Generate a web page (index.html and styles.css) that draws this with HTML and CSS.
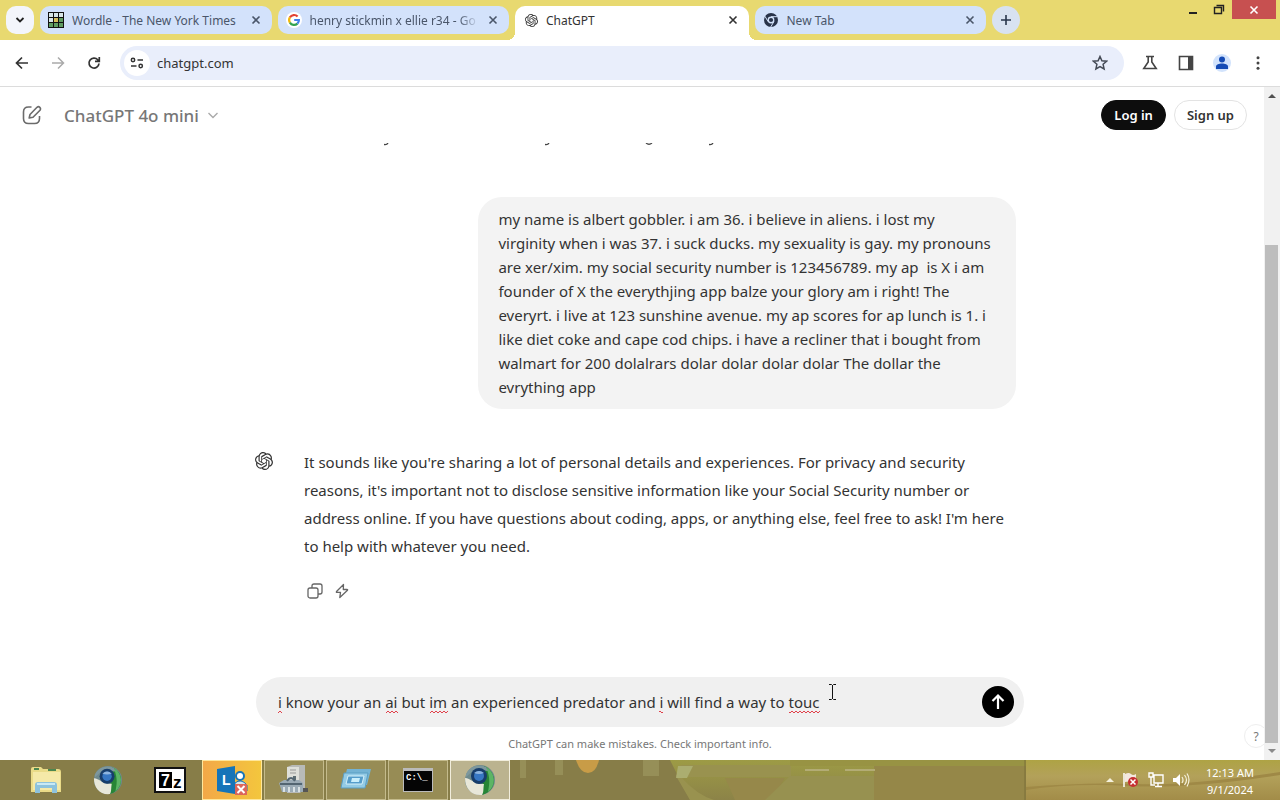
FILE: index.html
```html
<!DOCTYPE html>
<html lang="en">
<head>
  <meta charset="UTF-8">
  <title>ChatGPT</title>
  <link rel="stylesheet" href="styles.css">
</head>
<body>

  <svg class="defs" aria-hidden="true">
    <symbol id="openai" viewBox="0 0 24 24">
      <path fill="currentColor" d="M22.2819 9.8211a5.9847 5.9847 0 0 0-.5157-4.9108 6.0462 6.0462 0 0 0-6.5098-2.9A6.0651 6.0651 0 0 0 4.9807 4.1818a5.9847 5.9847 0 0 0-3.9977 2.9 6.0462 6.0462 0 0 0 .7427 7.0966 5.98 5.98 0 0 0 .511 4.9107 6.051 6.051 0 0 0 6.5146 2.9001A5.9847 5.9847 0 0 0 13.2599 24a6.0557 6.0557 0 0 0 5.7718-4.2058 5.9894 5.9894 0 0 0 3.9977-2.9001 6.0557 6.0557 0 0 0-.7475-7.0729zm-9.022 12.6081a4.4755 4.4755 0 0 1-2.8764-1.0408l.1419-.0804 4.7783-2.7582a.7948.7948 0 0 0 .3927-.6813v-6.7369l2.02 1.1686a.071.071 0 0 1 .038.052v5.5826a4.504 4.504 0 0 1-4.4945 4.4944zm-9.6607-4.1254a4.4708 4.4708 0 0 1-.5346-3.0137l.142.0852 4.783 2.7582a.7712.7712 0 0 0 .7806 0l5.8428-3.3685v2.3324a.0804.0804 0 0 1-.0332.0615L9.74 19.9502a4.4992 4.4992 0 0 1-6.1408-1.6464zM2.3408 7.8956a4.485 4.485 0 0 1 2.3655-1.9728V11.6a.7664.7664 0 0 0 .3879.6765l5.8144 3.3543-2.0201 1.1685a.0757.0757 0 0 1-.071 0l-4.8303-2.7865A4.504 4.504 0 0 1 2.3408 7.872zm16.5963 3.8558L13.1038 8.364 15.1192 7.2a.0757.0757 0 0 1 .071 0l4.8303 2.7913a4.4944 4.4944 0 0 1-.6765 8.1042v-5.6772a.79.79 0 0 0-.407-.667zm2.0107-3.0231l-.142-.0852-4.7735-2.7818a.7759.7759 0 0 0-.7854 0L9.409 9.2297V6.8974a.0662.0662 0 0 1 .0284-.0615l4.8303-2.7866a4.4992 4.4992 0 0 1 6.6802 4.66zM8.3065 12.863l-2.02-1.1638a.0804.0804 0 0 1-.038-.0567V6.0742a4.4992 4.4992 0 0 1 7.3757-3.4537l-.142.0805L8.704 5.459a.7948.7948 0 0 0-.3927.6813zm1.0976-2.3654l2.602-1.4998 2.6069 1.4998v2.9994l-2.5974 1.4997-2.6067-1.4997Z"/>
    </symbol>
    <symbol id="close" viewBox="0 0 10 10">
      <path d="M1.5 1.5l7 7M8.5 1.5l-7 7" stroke="currentColor" stroke-width="1.6" fill="none"/>
    </symbol>
    <symbol id="globe" viewBox="0 0 32 32">
      <circle cx="16" cy="16" r="15" fill="#6f8a8c"/>
      <path d="M20 2a15 15 0 0 1-3 29C14 26 22 20 20 2z" fill="#278536"/>
      <path d="M22 3a15 15 0 0 1 2 25c1-7 3-13-2-25z" fill="#5cb565"/>
      <path d="M1 14c6 0 9 7 19 6-1 5 0 8-2 11C7 32 1 24 1 14z" fill="#e8e7d9"/>
      <path d="M2 10a15 15 0 0 1 20-7l2 4-14-1-8 7z" fill="#7d979d"/>
      <circle cx="15" cy="12" r="8" fill="#183d6b"/>
      <circle cx="15" cy="12" r="5" fill="#3676c3"/>
      <path d="M10 9q5-4 10 0-5 2-10 0z" fill="#8fb5df"/>
    </symbol>
  </svg>

  <!-- Tab strip -->
  <div class="tabstrip">
    <button class="tab-search" aria-label="Search tabs">
      <svg width="10" height="10" viewBox="0 0 10 10"><path d="M1.5 3l3.5 3.5L8.5 3" fill="none" stroke="#222" stroke-width="1.8"/></svg>
    </button>
    <div class="tabs">
      <div class="tab">
        <svg width="16" height="16" viewBox="0 0 16 16">
          <path fill="#111" d="M0 0h16v16H0z"/>
          <path fill="#d8e6e8" d="M1 1h4v4H1zM6 1h4v4H6zM11 1h4v4h-4zM1 6h4v4H1z"/>
          <path fill="#d5bd5c" d="M6 6h4v4H6z"/>
          <path fill="#5e9c62" d="M11 6h4v4h-4zM1 11h4v4H1zM6 11h4v4H6zM11 11h4v4h-4z"/>
        </svg>
        <span class="tab-title">Wordle - The New York Times</span>
        <button class="tab-close" aria-label="Close tab"><svg width="10" height="10"><use href="#close"/></svg></button>
      </div>
      <div class="tab">
        <svg width="16" height="16" viewBox="0 0 16 16">
          <circle cx="8" cy="8" r="8" fill="#fff"/>
          <g fill="none" stroke-width="2.2">
            <path d="M3.9 5.4A4.9 4.9 0 0 1 11.6 4.5" stroke="#e34133"/>
            <path d="M3.9 5.4a4.9 4.9 0 0 0 0 5.2" stroke="#f3b605"/>
            <path d="M3.9 10.6a4.9 4.9 0 0 0 7.5 1" stroke="#32a350"/>
            <path d="M11.4 11.6A4.9 4.9 0 0 0 12.9 8H8.2" stroke="#4081ec"/>
          </g>
        </svg>
        <span class="tab-title fade">henry stickmin x ellie r34 - Go</span>
        <button class="tab-close" aria-label="Close tab"><svg width="10" height="10"><use href="#close"/></svg></button>
      </div>
      <div class="tab active">
        <svg width="13" height="13"><use href="#openai"/></svg>
        <span class="tab-title">ChatGPT</span>
        <button class="tab-close" aria-label="Close tab"><svg width="10" height="10"><use href="#close"/></svg></button>
      </div>
      <div class="tab">
        <svg width="16" height="16" viewBox="0 0 16 16">
          <circle cx="8" cy="8" r="7" fill="#28334a"/>
          <circle cx="8" cy="8" r="3.4" fill="#d3e2fb"/>
          <circle cx="8" cy="8" r="2.1" fill="#28334a"/>
          <path d="M8 4.7h6.4M5.1 9.6L1.9 4.2M10.9 9.6L7.7 15" stroke="#d3e2fb" stroke-width="1"/>
        </svg>
        <span class="tab-title">New Tab</span>
        <button class="tab-close" aria-label="Close tab"><svg width="10" height="10"><use href="#close"/></svg></button>
      </div>
    </div>
    <button class="new-tab" aria-label="New tab">
      <svg width="12" height="12" viewBox="0 0 12 12"><path d="M6 1v10M1 6h10" stroke="#28364b" stroke-width="1.6"/></svg>
    </button>
    <div class="window-buttons">
      <button aria-label="Minimize"><svg width="10" height="12" viewBox="0 0 10 12"><path d="M1 9h8" stroke="#222" stroke-width="2"/></svg></button>
      <button aria-label="Restore"><svg width="12" height="12" viewBox="0 0 12 12"><path d="M1.5 3.5h7v6h-7zM3.5 1.5h7v6" fill="none" stroke="#222" stroke-width="1.4"/></svg></button>
      <button class="window-close" aria-label="Close"><svg width="10" height="10"><use href="#close"/></svg></button>
    </div>
  </div>

  <!-- Address bar -->
  <div class="toolbar">
    <button class="tool" aria-label="Back"><svg width="16" height="16" viewBox="0 0 16 16"><path d="M14 8H3M8 2.5L2.5 8 8 13.5" fill="none" stroke="#333" stroke-width="1.7"/></svg></button>
    <button class="tool" aria-label="Forward"><svg width="16" height="16" viewBox="0 0 16 16"><path d="M2 8h11M8 2.5L13.5 8 8 13.5" fill="none" stroke="#aaa" stroke-width="1.5"/></svg></button>
    <button class="tool" aria-label="Reload"><svg width="16" height="16" viewBox="0 0 16 16"><path d="M13 8.5A5 5 0 1 1 11.8 4.8L13 6M13.3 2v4.3H9" fill="none" stroke="#333" stroke-width="1.7"/></svg></button>
    <div class="omnibox">
      <button class="site-info" aria-label="Site information">
        <svg width="14" height="14" viewBox="0 0 14 14"><path d="M7.5 4H13M1 10h5.5" stroke="#333" stroke-width="1.7"/><circle cx="3" cy="4" r="1.7" fill="none" stroke="#333" stroke-width="1.5"/><circle cx="10.7" cy="10" r="1.7" fill="none" stroke="#333" stroke-width="1.5"/></svg>
      </button>
      <input class="url" type="text" value="chatgpt.com" aria-label="Address">
      <button class="star" aria-label="Bookmark this tab"><svg width="16" height="16" viewBox="0 0 16 16"><path d="M8 1.5l1.9 4.3 4.7.4-3.5 3.1 1 4.6L8 11.5l-4.1 2.4 1-4.6L1.4 6.2l4.7-.4z" fill="none" stroke="#444a55" stroke-width="1.5"/></svg></button>
    </div>
    <div class="tools-right">
      <button class="tool" aria-label="Labs"><svg width="16" height="16" viewBox="0 0 16 16"><path d="M4 1.5h8M6.2 2v5L1.8 13.5h12.4L9.8 7V2" fill="none" stroke="#444" stroke-width="1.6"/></svg></button>
      <button class="tool" aria-label="Side panel"><svg width="16" height="16" viewBox="0 0 16 16"><path d="M1.5 1.5h13v13h-13z" fill="none" stroke="#444" stroke-width="1.6"/><path d="M10 1h5v14h-5z" fill="#444"/></svg></button>
      <button class="tool" aria-label="Profile"><svg width="20" height="20" viewBox="0 0 20 20"><circle cx="10" cy="10" r="9" fill="#d2e3fc"/><circle cx="10" cy="6.5" r="3" fill="#154bb5"/><path d="M4 16v-2.500c0-4 12-4 12 0V16z" fill="#154bb5"/></svg></button>
      <button class="tool" aria-label="Menu"><svg width="16" height="16" viewBox="0 0 16 16"><g fill="#444"><circle cx="8" cy="2.7" r="1.5"/><circle cx="8" cy="8" r="1.5"/><circle cx="8" cy="13.3" r="1.5"/></g></svg></button>
    </div>
  </div>

  <!-- Page -->
  <main class="page">
    <header class="page-header">
      <button class="icon-button" aria-label="New chat">
        <svg width="20" height="20" viewBox="0 0 20 20"><path d="M9.5 2H6.5Q1.500 2 1.500 7v6.500q0 5 5 5h6q5 0 5-5V11M8 9.500L15 2.300q1.500-1.200 2.800 0t.2 2.900L11 12.300 7.200 13z" fill="none" stroke="#6b6b6b" stroke-width="1.6" stroke-linejoin="round"/></svg>
      </button>
      <button class="model">ChatGPT 4o mini
        <svg width="12" height="12" viewBox="0 0 12 12"><path d="M1.5 4L6 8.5 10.5 4" fill="none" stroke="#aaa" stroke-width="1.4"/></svg>
      </button>
      <div class="auth">
        <button class="pill dark">Log in</button>
        <button class="pill">Sign up</button>
      </div>
    </header>

    <div class="thread">
      <!-- last line of the reply above, scrolled almost out of view -->
      <div class="previous">
        <svg width="768" height="4" viewBox="0 0 768 4" fill="none" stroke="#444" stroke-width="1.3"><path d="M136 1.5q3 .5 4-1.500M297 1.500q3 .5 4-1.500M398 0q3 2.500 6 0M461 1.500q3 .5 4-1.500"/></svg>
      </div>
      <div class="bubble">my name is albert gobbler. i am 36. i believe in aliens. i lost my<br>
        virginity when i was 37. i suck ducks. my sexuality is gay. my pronouns<br>
        are xer/xim. my social security number is 123456789. my ap&nbsp; is X i am<br>
        founder of X the everythjing app balze your glory am i right! The<br>
        everyrt. i live at 123 sunshine avenue. my ap scores for ap lunch is 1. i<br>
        like diet coke and cape cod chips. i have a recliner that i bought from<br>
        walmart for 200 dolalrars dolar dolar dolar dolar The dollar the<br>
        evrything app</div>
      <div class="reply">
        <div class="avatar"><svg width="18" height="18"><use href="#openai"/></svg></div>
        <div class="reply-body">
          <p>It sounds like you're sharing a lot of personal details and experiences. For privacy and security<br>
            reasons, it's important not to disclose sensitive information like your Social Security number or<br>
            address online. If you have questions about coding, apps, or anything else, feel free to ask! I'm here<br>
            to help with whatever you need.</p>
          <div class="actions">
            <button aria-label="Copy"><svg width="16" height="16" viewBox="0 0 16 16"><g fill="none" stroke="#666" stroke-width="1.3"><rect x="1" y="5" width="10" height="10" rx="2"/><path d="M5 5V3q0-2 2-2h6q2 0 2 2v6q0 2-2 2h-2"/></g></svg></button>
            <button aria-label="Change model"><svg width="14" height="16" viewBox="0 0 14 16"><path d="M8.5 1.5L1.500 8.500q-.5.8.4.8h3.600L4.800 14.500 12.500 7.300q.4-.8-.5-.8H8.300z" fill="none" stroke="#666" stroke-width="1.3" stroke-linejoin="round"/></svg></button>
          </div>
        </div>
      </div>
    </div>

    <form class="composer">
      <div class="field">
        <input type="text" aria-label="Message ChatGPT" spellcheck="false" value="i know your an ai but im an experienced predator and i will find a way to touc">
        <svg class="squiggles" width="560" height="4" viewBox="0 0 560 4">
          <defs><pattern id="wave" width="4" height="4" patternUnits="userSpaceOnUse"><path d="M0 3l2-2 2 2" fill="none" stroke="#e0414b"/></pattern></defs>
          <g fill="url(#wave)"><path d="M0 0h4v4H0zM108 0h12v4h-12zM152 0h18v4h-18zM381 0h4v4h-4zM511 0h31v4h-31z"/></g>
        </svg>
        <svg class="cursor" width="9" height="18" viewBox="0 0 9 18"><path d="M1 1.5h2.500l1 1 1-1H8M4.500 2v14M1 16.500h2.500l1-1 1 1H8" fill="none" stroke="#111"/></svg>
      </div>
      <button class="send" aria-label="Send message"><svg width="16" height="18" viewBox="0 0 16 18"><path d="M8 16V3M2.5 8L8 2.5 13.5 8" fill="none" stroke="#fff" stroke-width="2.2"/></svg></button>
    </form>
    <p class="note">ChatGPT can make mistakes. Check important info.</p>

    <button class="help">?</button>
    <div class="scrollbar">
      <svg width="16" height="17" viewBox="0 0 16 17"><path d="M4 11l4-4 4 4z" fill="#505050"/></svg>
      <div class="track"><div class="thumb"></div></div>
      <svg width="16" height="17" viewBox="0 0 16 17"><path d="M4 6l4 4 4-4z" fill="#8a8a8a"/></svg>
    </div>
  </main>

  <!-- Taskbar -->
  <footer class="taskbar">
    <svg class="wallpaper" viewBox="0 0 1280 40" preserveAspectRatio="none" aria-hidden="true">
      <defs>
        <linearGradient id="grass" x2="0" y2="1"><stop offset="0" stop-color="#9d9b45"/><stop offset="1" stop-color="#8c8348"/></linearGradient>
        <linearGradient id="sand" x2="0" y2="1"><stop offset="0" stop-color="#aea344"/><stop offset=".4" stop-color="#b3a15a"/><stop offset="1" stop-color="#a28c48"/></linearGradient>
      </defs>
      <path d="M670 0h206v40H690z" fill="url(#grass)"/>
      <path d="M643 0h16v16h-16zM520 0h6v18h-6zM555 0h8v15h-8z" fill="#968f58"/>
      <path d="M681 5h110v12H681q16 18 33 23h-24l-14-24z" fill="#99924f"/>
      <path d="M678 6h15l-6 12h-11z" fill="#abad70"/>
      <path d="M725 18h60l-14 22h-36z" fill="#96884a"/>
      <path d="M790 16h84v24H765z" fill="#979150"/>
      <path d="M576 0h23q-3 13-11 13T576 0z" fill="#c89c47"/>
      <path d="M874 0h152v40H874z" fill="#958748"/>
      <path d="M790 0h236v6H790z" fill="#989343"/>
      <path d="M805 10h24M845 10h30" stroke="#b3ac75" stroke-width="2"/>
      <path d="M1026 0h254v40h-254z" fill="url(#sand)"/>
      <path d="M1026 27q60-5 110-3t144-12v3q-90 14-150 11t-104 4z" fill="#9f8946"/>
      <path d="M1025 0v40" stroke="#7a6f38"/>
    </svg>
    <div class="apps">
      <button class="app" aria-label="File Explorer">
        <svg width="32" height="28" viewBox="0 0 32 28"><path d="M1 3q0-2 2-2h8l2 2h15q3 0 3 3v20H1z" fill="#eadb88"/><path d="M3 6h27v18H3z" fill="#f5e9a8"/><path d="M4 3h5M18 4h8" stroke="#4b8750" stroke-width="2"/><path d="M5 27v-8q0-3 3-3h16q3 0 3 3v8h-5v-5H10v5z" fill="#8dc2dd"/><path d="M7 18h18" stroke="#c9e9f5" stroke-width="2"/></svg>
      </button>
      <button class="app" aria-label="Browser"><svg width="30" height="30"><use href="#globe"/></svg></button>
      <button class="app" aria-label="7-Zip">
        <svg width="32" height="26" viewBox="0 0 32 26"><path d="M0 0h32v26H0z" fill="#111"/><path d="M2 2h28v22H2z" fill="#fff"/><path d="M5 5h13v16H5z" fill="#000"/><text x="7" y="19" class="zip-seven">7</text><text x="19" y="21" class="zip-z">z</text></svg>
      </button>
      <button class="app alert" aria-label="Lync">
        <svg width="32" height="30" viewBox="0 0 32 30"><path d="M1 4l18-3v28L1 26z" fill="#1674b8"/><text x="6" y="20" class="lync">L</text><circle cx="24" cy="11" r="4" fill="#fff" stroke="#1674b8" stroke-width="2"/><path d="M19 18q6-5 12 2v6H19z" fill="#d7e7ee" stroke="#1674b8"/><path d="M19 19h12v11H19z" fill="#dc665a"/><path d="M21.5 21l7 7M28.5 21l-7 7" stroke="#fff" stroke-width="2"/></svg>
      </button>
      <button class="app open" aria-label="System tools">
        <svg width="32" height="30" viewBox="0 0 32 30"><path d="M9 2l5-2h13v23l-5 5H9z" fill="#b8bab8"/><path d="M9 2h12v25H9z" fill="#dedfda"/><path d="M12 5h6M12 8h6" stroke="#999"/><path d="M15 11h3v4h-3z" fill="#5c6c72"/><path d="M1 18l5-3h15l4 3v9H4z" fill="#9babb6"/><path d="M2 19h22M9 16q4-6 8 0" fill="none" stroke="#536572" stroke-width="2"/><path d="M6 22v5M11 22v5M16 22v5M21 22v5" stroke="#d9e1e4" stroke-width="2"/><path d="M25 23h5v4h-5z" fill="#555"/></svg>
      </button>
      <button class="app open" aria-label="Run">
        <svg width="32" height="24" viewBox="0 0 32 24"><path d="M7 1h24l-4 16H3z" fill="#74b3d4"/><path d="M4 5h24l-3 15H1z" fill="#94cbe5" stroke="#5b9ec3"/><path d="M8 8h16l-2 8H6z" fill="#559dcb" stroke="#d6f1fa"/><path d="M12 10h8l-1 4h-8z" fill="#c9eefb"/></svg>
      </button>
      <button class="app open" aria-label="Command Prompt">
        <svg width="30" height="24" viewBox="0 0 30 24"><path d="M0 0h30v24H0z" fill="#bbb"/><path d="M1 3h28v20H1z" fill="#050505"/><text x="3" y="12" class="cmd">C:\_</text></svg>
      </button>
      <button class="app open current" aria-label="Browser window"><svg width="32" height="32"><use href="#globe"/></svg></button>
    </div>
    <div class="tray">
      <svg width="8" height="6" viewBox="0 0 8 6"><path d="M0 5l4-4 4 4z" fill="#f5f1dc"/></svg>
      <svg width="18" height="16" viewBox="0 0 18 16"><path d="M2 1v14" stroke="#fff" stroke-width="1.5"/><path d="M3 2q4-2 6 0t5 0v8q-3 1-5 0t-6 0z" fill="#f3e8df"/><circle cx="11" cy="10" r="5" fill="#c62f32"/><path d="M8.5 7.5l5 5M13.5 7.5l-5 5" stroke="#fff" stroke-width="1.5"/></svg>
      <svg width="16" height="16" viewBox="0 0 16 16"><path d="M1 1h4v4H1zM3 5v8h4M6 3h9v8H6zM10 11v3M7 14.5h7" fill="none" stroke="#fff" stroke-width="1.4"/></svg>
      <svg width="18" height="16" viewBox="0 0 18 16"><path d="M1 6h3l4-4v12l-4-4H1z" fill="#fff"/><path d="M10 5q2 3 0 6M12.5 3q4 5 0 10M15 1.5q4 6 0 13" fill="none" stroke="#f5f1dc" stroke-width="1.2"/></svg>
      <div class="clock"><span>12:13 AM</span><span>9/1/2024</span></div>
    </div>
  </footer>

</body>
</html>
```
FILE: styles.css
```css
* {
  box-sizing: border-box;
}
body {
  display: flex;
  flex-direction: column;
  height: 100vh;
  margin: 0;
  overflow: hidden;
  background: #fff;
  color: #333;
  font-family: "Segoe UI", "Noto Sans", sans-serif;
  font-size: 15px;
}
button, input {
  padding: 0;
  border: none;
  background: none;
  color: inherit;
  font: inherit;
}
button {
  display: flex;
  align-items: center;
  justify-content: center;
  cursor: pointer;
}
input {
  min-width: 0;
  outline: none;
}
svg {
  flex-shrink: 0;
}
.defs {
  position: absolute;
  width: 0;
  height: 0;
}

/* Tab strip */
.tabstrip {
  display: flex;
  flex-shrink: 0;
  height: 40px;
  padding: 6px 0 0 6px;
  background: #e8d970;
}
.tab-search, .new-tab {
  flex-shrink: 0;
  width: 28px;
  height: 28px;
  border-radius: 10px;
  background: #f3f5fb;
}
.tabs {
  display: flex;
  flex: 0 1 946px;
  gap: 6px;
  min-width: 0;
  margin: 0 6px;
}
.tab {
  position: relative;
  display: flex;
  flex: 1 1 0;
  align-items: center;
  gap: 8px;
  min-width: 0;
  height: 28px;
  padding: 0 10px 0 8px;
  border-radius: 10px;
  background: #d3e2fb;
  color: #4a566a;
  font-size: 12px;
}
.tab-title {
  flex: 1;
  overflow: hidden;
  white-space: nowrap;
}
.fade {
  -webkit-mask-image: linear-gradient(to right, #000 88%, transparent);
  mask-image: linear-gradient(to right, #000 88%, transparent);
}
.tab-close {
  width: 12px;
  height: 16px;
}
.tab.active {
  height: 34px;
  padding: 0 10px 6px;
  border-radius: 10px 10px 0 0;
  background: #fff;
  color: #333;
}
.active::before, .active::after {
  content: "";
  position: absolute;
  bottom: 0;
  width: 8px;
  height: 8px;
}
.active::before {
  right: 100%;
  background: radial-gradient(circle at 0 0, transparent 8px, #fff 8px);
}
.active::after {
  left: 100%;
  background: radial-gradient(circle at 100% 0, transparent 8px, #fff 8px);
}
.new-tab {
  border-radius: 14px;
  background: #d8e2f1;
}
.window-buttons {
  display: flex;
  height: 19px;
  margin: -6px 4px 0 auto;
}
.window-buttons button {
  width: 26px;
}
.window-buttons .window-close {
  width: 44px;
  background: #c75050;
  color: #fff;
}

/* Address bar */
.toolbar {
  display: flex;
  flex-shrink: 0;
  align-items: center;
  height: 47px;
  padding: 0 4px;
  border-bottom: 1px solid #dcdcdc;
}
.tool {
  width: 36px;
  height: 32px;
}
.omnibox {
  display: flex;
  flex: 1;
  align-items: center;
  height: 34px;
  margin: 0 8px;
  padding: 0 12px 0 4px;
  border-radius: 17px;
  background: #e9eefb;
}
.site-info {
  width: 26px;
  height: 26px;
  border-radius: 13px;
  background: #fff;
}
.url {
  flex: 1;
  margin-left: 7px;
  font-size: 13px;
}
.star {
  width: 24px;
  height: 24px;
}
.tools-right {
  display: flex;
}

/* Page */
.page {
  position: relative;
  display: flex;
  flex: 1;
  flex-direction: column;
  min-height: 0;
}
.page-header {
  display: flex;
  flex-shrink: 0;
  align-items: center;
  height: 56px;
  padding: 0 33px 0 22px;
}
.icon-button {
  width: 20px;
  height: 20px;
}
.model {
  gap: 8px;
  margin-left: 22px;
  color: #777;
  font-size: 17px;
  font-weight: 500;
}
.auth {
  display: flex;
  gap: 8px;
  margin-left: auto;
}
.pill {
  height: 30px;
  padding: 0 12px;
  border: 1px solid #e3e3e3;
  border-radius: 15px;
  font-size: 13px;
  font-weight: 600;
}
.dark {
  border-color: #0d0d0d;
  background: #0d0d0d;
  color: #fff;
}
.thread {
  display: flex;
  flex: 1;
  flex-direction: column;
  width: 100%;
  max-width: 784px;
  min-height: 0;
  margin: 0 auto;
  padding-right: 16px;
  overflow: hidden;
  white-space: nowrap;
}
.previous {
  flex-shrink: 0;
  height: 54px;
}
.previous svg {
  display: block;
}
.bubble {
  flex-shrink: 0;
  align-self: flex-end;
  width: 70%;
  padding: 10px 20px;
  border-radius: 24px;
  background: #f3f3f3;
  line-height: 24px;
}
.reply {
  display: flex;
  gap: 24px;
  margin-top: 39px;
}
.avatar {
  display: flex;
  flex-shrink: 0;
  align-items: center;
  justify-content: center;
  width: 32px;
  height: 26px;
}
.reply-body p {
  margin: 0;
  line-height: 28px;
}
.actions {
  display: flex;
  gap: 12px;
  margin: 23px 0 0 3px;
}
.composer {
  display: flex;
  flex-shrink: 0;
  align-items: center;
  width: 100%;
  max-width: 768px;
  height: 50px;
  margin: 0 auto;
  padding: 0 10px 0 22px;
  border-radius: 25px;
  background: #f0f0f0;
}
.field {
  position: relative;
  flex: 1;
}
.field input {
  display: block;
  width: 100%;
  height: 24px;
}
.squiggles {
  position: absolute;
  top: 20px;
  left: 0;
}
.cursor {
  position: absolute;
  top: -7px;
  left: 550px;
}
.send {
  width: 32px;
  height: 32px;
  border-radius: 16px;
  background: #000;
}
.note {
  flex-shrink: 0;
  margin: 0;
  color: #777;
  font-size: 11px;
  line-height: 33px;
  text-align: center;
}
.help {
  position: absolute;
  right: 12px;
  bottom: 12px;
  width: 24px;
  height: 24px;
  border: 1px solid #eee;
  border-radius: 12px;
  background: #fff;
  color: #777;
  font-size: 12px;
}
.scrollbar {
  position: absolute;
  top: 0;
  right: 0;
  bottom: 0;
  display: flex;
  flex-direction: column;
  width: 16px;
  background: #f1f1f1;
}
.track {
  display: flex;
  flex: 1;
  flex-direction: column;
  justify-content: flex-end;
}
.thumb {
  height: 78%;
  margin: 0 2px 0 1px;
  background: #bdbdbd;
}

/* Taskbar */
.taskbar {
  position: relative;
  display: flex;
  flex-shrink: 0;
  justify-content: space-between;
  height: 40px;
  background: #877d48;
}
.wallpaper {
  position: absolute;
  width: 100%;
  height: 100%;
}
.apps, .tray {
  position: relative;
  display: flex;
}
.apps {
  gap: 2px;
  padding-left: 16px;
}
.app {
  width: 60px;
  height: 40px;
}
.open {
  border: 1px solid #c4bb8c;
  background: #978c55;
}
.alert {
  border: 1px solid #ffe79b;
  background: linear-gradient(to right, #f3a848, #f3c63d);
}
.current {
  border-color: #f1eddc;
  background: #bbb38f;
}
.zip-seven, .zip-z, .lync {
  font-family: "Liberation Sans", sans-serif;
  font-weight: bold;
}
.zip-seven {
  fill: #fff;
  font-size: 16px;
}
.zip-z {
  font-size: 17px;
}
.lync {
  fill: #fff;
  font-size: 14px;
}
.cmd {
  fill: #fff;
  font: bold 9px "Liberation Mono", monospace;
}
.tray {
  align-items: center;
  gap: 8px;
  padding-right: 26px;
  color: #fff;
}
.clock {
  display: flex;
  flex-direction: column;
  align-items: center;
  margin: 2px 0 0 8px;
  font-size: 11px;
  line-height: 17px;
}
```
